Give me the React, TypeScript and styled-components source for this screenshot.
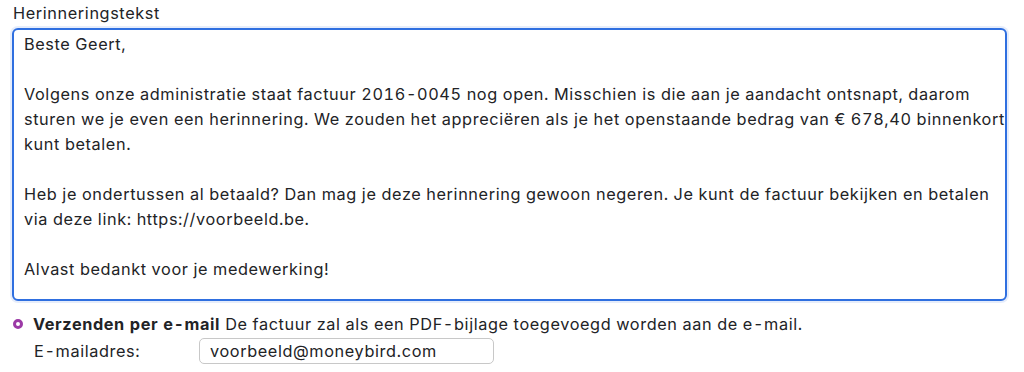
import React from "react";
import styled, { createGlobalStyle } from "styled-components";

const GlobalStyle = createGlobalStyle`
  html, body {
    margin: 0;
    padding: 0;
    background: #ffffff;
  }
  body {
    font-family: Inter, "Noto Sans", sans-serif;
    color: #222326;
  }
`;

const Page = styled.div`
  width: 1024px;
  height: 372px;
  padding: 3px 17px 0 12px;
  box-sizing: border-box;
  overflow: hidden;
  font-size: 16.3px;
  letter-spacing: 0.6px;
  font-variant-numeric: tabular-nums;
`;

const Label = styled.label`
  display: block;
  line-height: 21px;
  padding-left: 1px;
  margin-bottom: 4px;
  color: #222326;
`;

const TextArea = styled.textarea`
  display: block;
  width: 100%;
  height: 273px;
  box-sizing: border-box;
  margin: 0;
  padding: 2px 0 0 10px;
  border: 2px solid #2f6fe0;
  border-radius: 6px;
  box-shadow: 0 0 0 2px rgba(47, 111, 224, 0.12);
  outline: none;
  resize: none;
  font-family: inherit;
  font-size: inherit;
  letter-spacing: inherit;
  font-variant-numeric: inherit;
  line-height: 25px;
  color: #222326;
  background: #ffffff;
  overflow: hidden;
`;

const Options = styled.div`
  display: flex;
  flex-direction: column;
  gap: 3px;
  margin-top: 12px;
`;

const RadioRow = styled.div`
  display: flex;
  align-items: center;
  gap: 10px;
  line-height: 22px;
`;

const Radio = styled.span`
  width: 10px;
  height: 10px;
  box-sizing: border-box;
  border: 3px solid #9c3aa6;
  border-radius: 50%;
  background: #ffffff;
  flex: none;
  margin-left: 1px;
`;

const Strong = styled.strong`
  font-weight: 700;
  margin-right: 5px;
`;

const FieldRow = styled.div`
  display: grid;
  grid-template-columns: 165px 295px;
  align-items: center;
  padding-left: 22px;
`;

const Input = styled.input`
  box-sizing: border-box;
  height: 26px;
  width: 295px;
  padding: 0 10px;
  border: 1px solid #c8c8c8;
  border-radius: 5px;
  font-family: inherit;
  font-size: inherit;
  letter-spacing: inherit;
  color: #222326;
  background: #ffffff;
  outline: none;
`;

const message = `Beste Geert,

Volgens onze administratie staat factuur 2016-0045 nog open. Misschien is die aan je aandacht ontsnapt, daarom sturen we je even een herinnering. We zouden het appreciëren als je het openstaande bedrag van € 678,40 binnenkort kunt betalen.

Heb je ondertussen al betaald? Dan mag je deze herinnering gewoon negeren. Je kunt de factuur bekijken en betalen via deze link: https://voorbeeld.be.

Alvast bedankt voor je medewerking!`;

export default function App() {
  return (
    <Page>
      <GlobalStyle />
      <Label htmlFor="reminder">Herinneringstekst</Label>
      <TextArea id="reminder" defaultValue={message} spellCheck={false} />
      <Options>
        <RadioRow>
          <Radio />
          <span>
            <Strong>Verzenden per e-mail</Strong>
            De factuur zal als een PDF-bijlage toegevoegd worden aan de e-mail.
          </span>
        </RadioRow>
        <FieldRow>
          <span>E-mailadres:</span>
          <Input defaultValue="voorbeeld@moneybird.com" spellCheck={false} />
        </FieldRow>
      </Options>
    </Page>
  );
}
